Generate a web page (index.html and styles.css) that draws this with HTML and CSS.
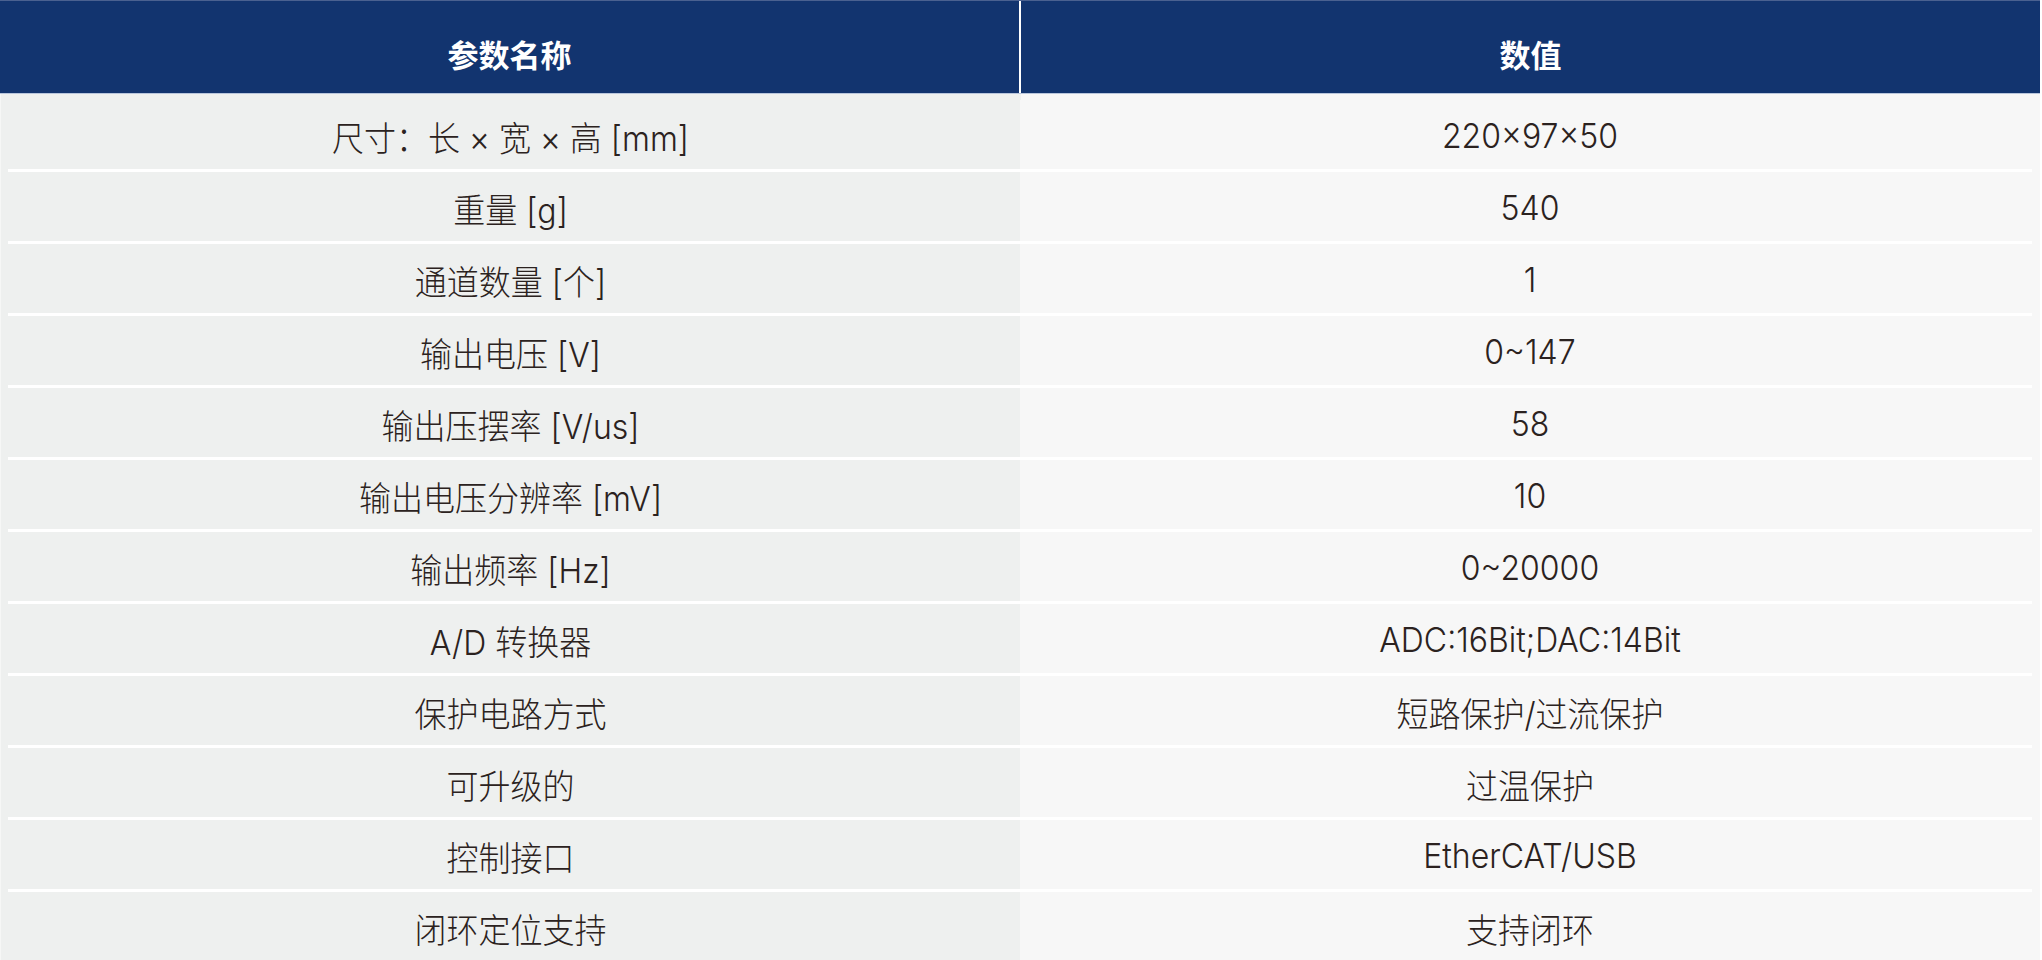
FILE: index.html
```html
<!DOCTYPE html>
<html lang="zh-CN">
<head>
<meta charset="utf-8">
<title>参数表</title>
<link rel="stylesheet" href="styles.css">
</head>
<body>
<div class="spec-table">
  <div class="head">
    <div class="hcell">参数名称</div>
    <div class="hcell">数值</div>
  </div>
  <div class="body">
    <div class="row"><div class="cell name"><span>尺寸：长 × 宽 × 高 [mm]</span></div><div class="cell val"><span>220×97×50</span></div></div>
    <div class="row"><div class="cell name"><span>重量 [g]</span></div><div class="cell val"><span>540</span></div></div>
    <div class="row"><div class="cell name"><span>通道数量 [个]</span></div><div class="cell val"><span>1</span></div></div>
    <div class="row"><div class="cell name"><span>输出电压 [V]</span></div><div class="cell val"><span>0~147</span></div></div>
    <div class="row"><div class="cell name"><span>输出压摆率 [V/us]</span></div><div class="cell val"><span>58</span></div></div>
    <div class="row"><div class="cell name"><span>输出电压分辨率 [mV]</span></div><div class="cell val"><span>10</span></div></div>
    <div class="row"><div class="cell name"><span>输出频率 [Hz]</span></div><div class="cell val"><span>0~20000</span></div></div>
    <div class="row"><div class="cell name"><span>A/D 转换器</span></div><div class="cell val"><span>ADC:16Bit;DAC:14Bit</span></div></div>
    <div class="row"><div class="cell name"><span>保护电路方式</span></div><div class="cell val"><span>短路保护/过流保护</span></div></div>
    <div class="row"><div class="cell name"><span>可升级的</span></div><div class="cell val"><span>过温保护</span></div></div>
    <div class="row"><div class="cell name"><span>控制接口</span></div><div class="cell val"><span>EtherCAT/USB</span></div></div>
    <div class="row last"><div class="cell name"><span>闭环定位支持</span></div><div class="cell val"><span>支持闭环</span></div></div>
  </div>
</div>
</body>
</html>
```
FILE: styles.css
```css
html, body {
  margin: 0;
  padding: 0;
  background: #ffffff;
}
body {
  font-family: Inter, "Noto Sans CJK SC", sans-serif;
  color: #2b2220;
  overflow: hidden;
}
.spec-table {
  width: 2040px;
}
.head {
  display: grid;
  grid-template-columns: 1019px 1021px;
  height: 94px;
  background: #12346f;
  border-top: 1px solid #4a6190;
  border-bottom: 1px solid #b9c6dc;
  box-sizing: border-box;
}
.hcell {
  display: flex;
  align-items: center;
  justify-content: center;
  padding-top: 12px;
  color: #ffffff;
  font-family: "Noto Sans CJK SC", sans-serif;
  font-weight: 700;
  font-size: 31px;
}
.hcell + .hcell {
  border-left: 2px solid #ffffff;
}
.body {
  display: flex;
  flex-direction: column;
  background: linear-gradient(to right, #eef0ef 0, #eef0ef 1020px, #f7f7f7 1020px);
  padding-top: 6px;
  border-left: 1px solid #f6f7f6;
}
.row {
  display: grid;
  grid-template-columns: 1019px 1020px;
  height: 72px;
}
.cell {
  display: flex;
  align-items: center;
  justify-content: center;
  border-bottom: 3px solid #ffffff;
  font-size: 32px;
  font-weight: 300;
}
.cell span {
  display: inline-block;
  transform: scaleY(1.08);
  padding-top: 2px;
}
.name {
  margin-left: 7px;
  padding-right: 7px;
  background: #eef0ef;
}
.val {
  margin-right: 8px;
  padding-left: 8px;
  background: #f7f7f7;
}
.last .cell {
  border-bottom-color: transparent;
}
```
